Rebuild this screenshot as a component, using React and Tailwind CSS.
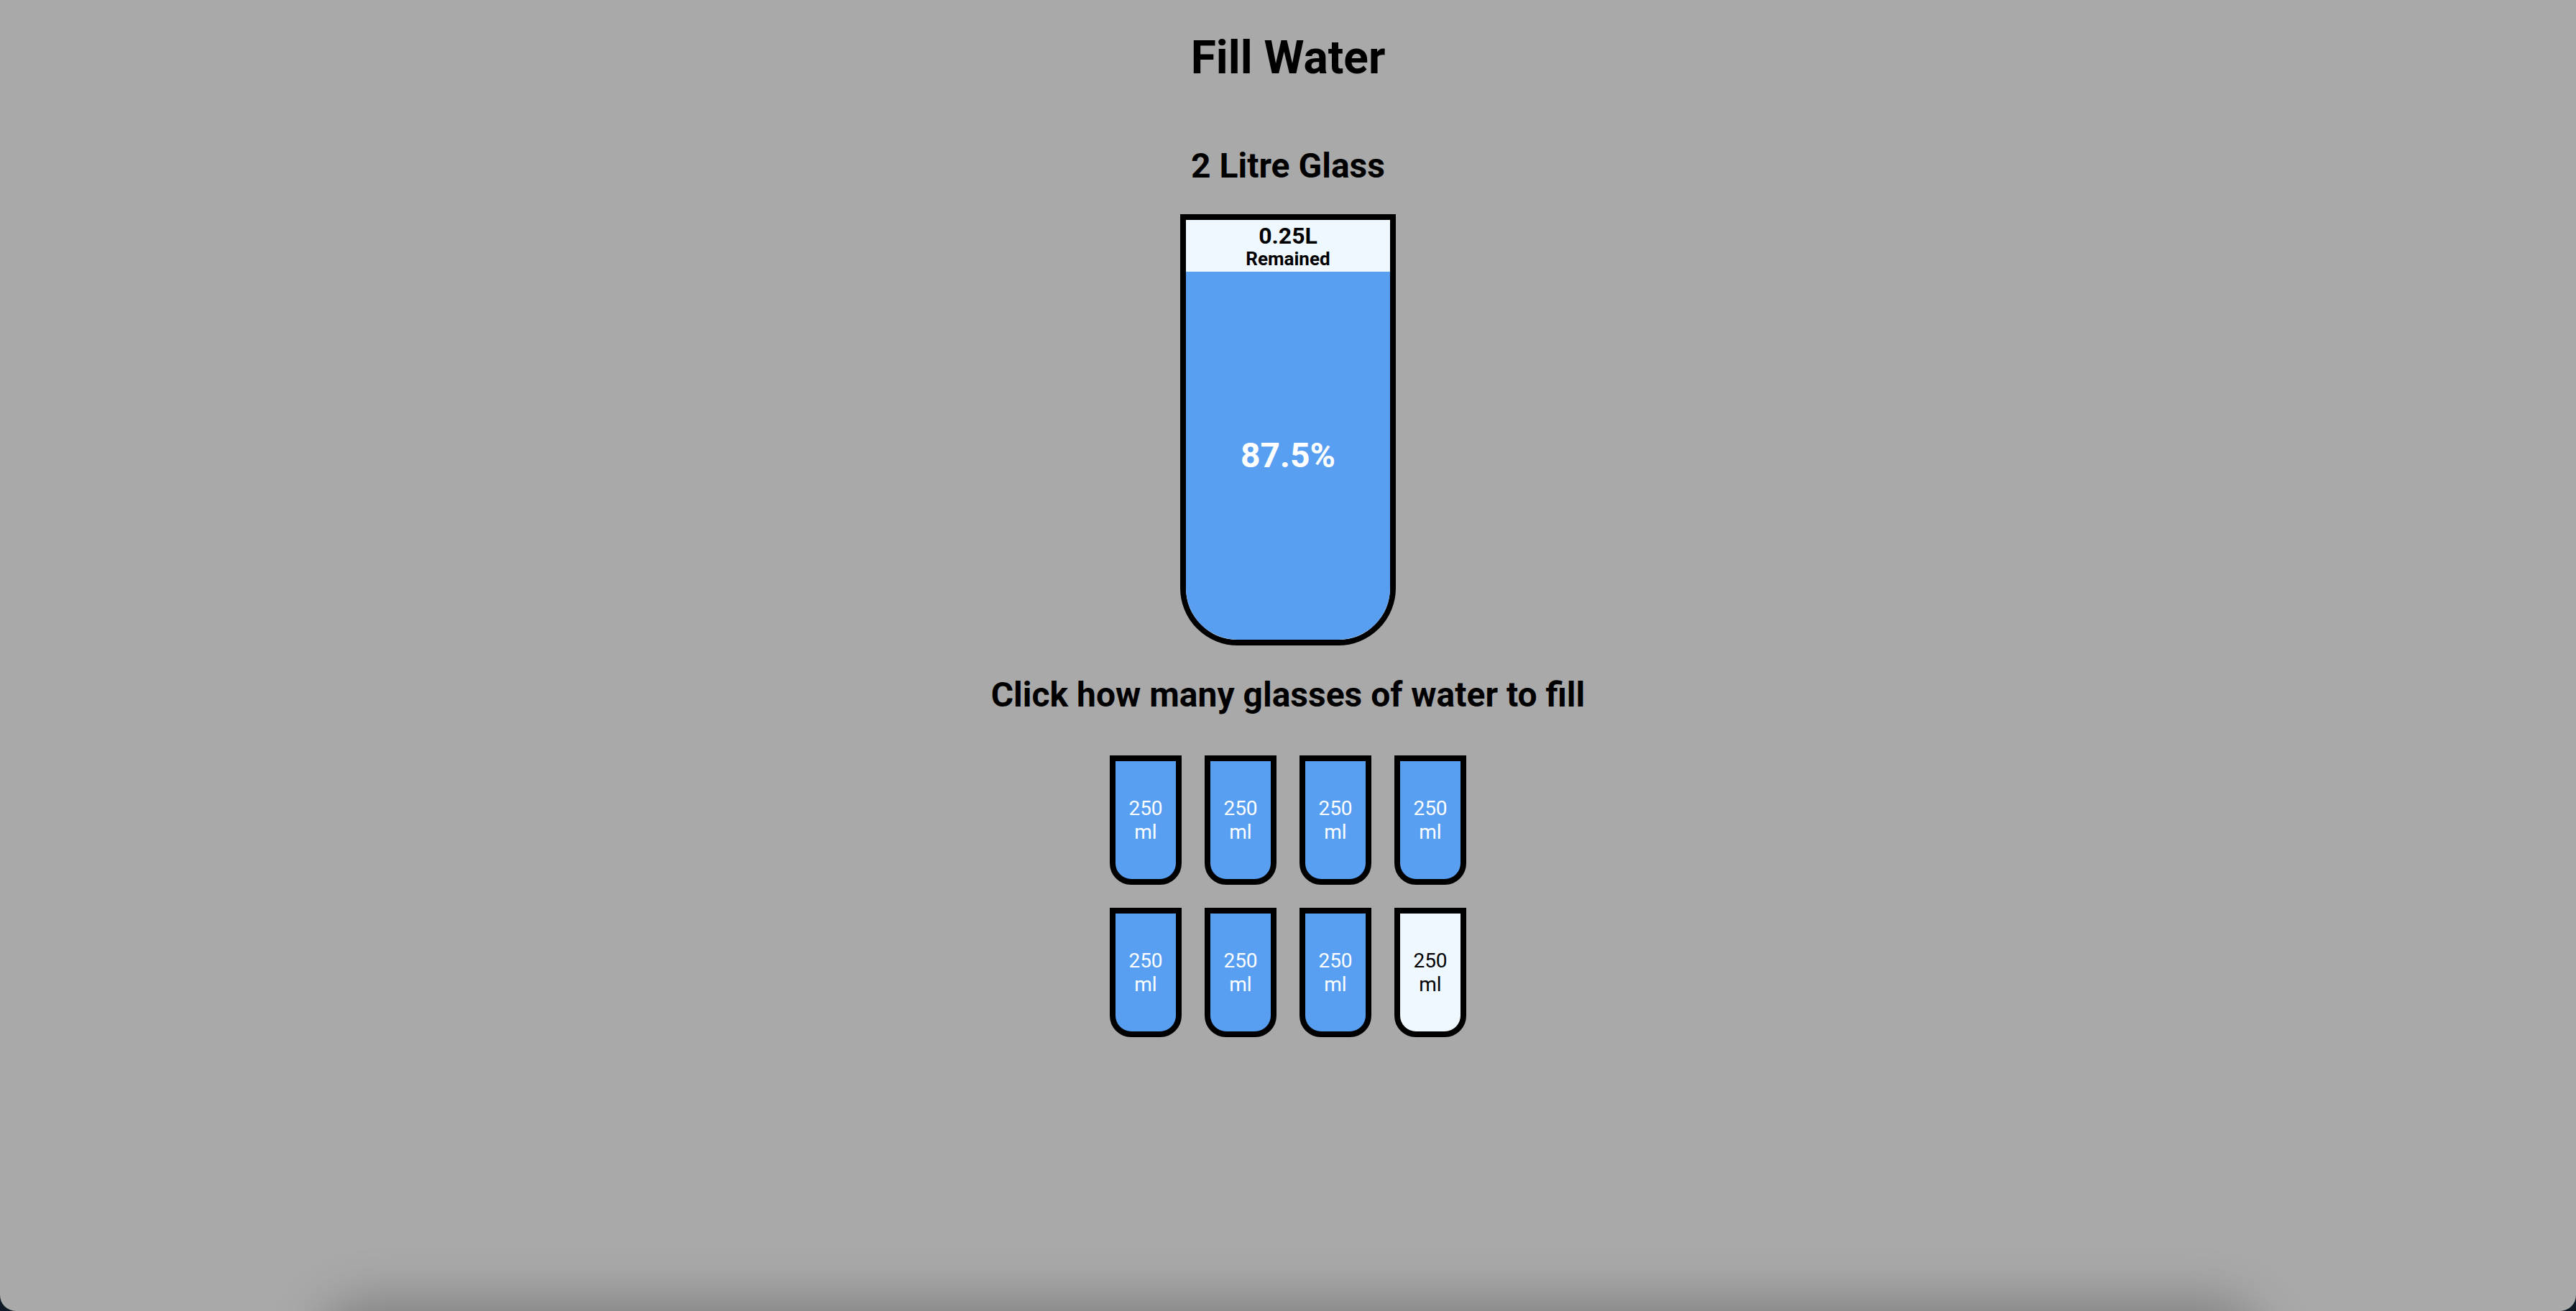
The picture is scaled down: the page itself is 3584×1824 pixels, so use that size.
import { useState } from "react";

const TOTAL_CUPS = 8;

const Cup = ({ full, onClick }) => (
  <button
    onClick={onClick}
    className={`w-[100px] h-[180px] border-8 border-black rounded-b-[30px] flex items-center justify-center text-center text-[28px] leading-[normal] cursor-pointer ${
      full ? "bg-[#589ff2] text-white" : "bg-[#f0f8ff] text-black"
    }`}
  >
    <span className="max-w-[60px]">250 ml</span>
  </button>
);

export default function App() {
  const [filled, setFilled] = useState(7);

  const percent = (filled / TOTAL_CUPS) * 100;
  const remained = 2 - filled * 0.25;

  return (
    <div className="min-h-screen bg-[#0f1b27]">
      <div className="relative h-[1824px] overflow-hidden rounded-b-[22px] bg-[#a9a9a9] flex flex-col items-center font-['Roboto','Liberation_Sans',sans-serif] text-black">
        <h1 className="mt-[43px] text-[64px] font-bold leading-[normal]">Fill Water</h1>
        <h2 className="mt-[84px] text-[48px] font-bold leading-[normal]">2 Litre Glass</h2>

        {/* big glass */}
        <div className="mt-[39px] w-[300px] h-[600px] border-8 border-black rounded-b-[80px] bg-[#f0f8ff] flex flex-col overflow-hidden">
          <div className="h-[72px] flex flex-col items-center justify-center font-bold leading-[normal]">
            <span className="text-[32px]">{remained}L</span>
            <span className="text-[26px] -mt-[2px]">Remained</span>
          </div>
          <div className="flex-1 bg-[#589ff2] flex items-center justify-center text-white text-[48px] font-bold">
            {percent}%
          </div>
        </div>

        <h3 className="mt-[40px] text-[48px] font-bold leading-[normal]">Click how many glasses of water to fill</h3>

        <div className="mt-[56px] grid grid-cols-4 gap-[32px]">
          {Array.from({ length: TOTAL_CUPS }).map((_, i) => (
            <Cup key={i} full={i < filled} onClick={() => setFilled(i + 1 === filled ? i : i + 1)} />
          ))}
        </div>

        {/* shadow from something sitting just under the window */}
        <div className="absolute left-[457px] right-[453px] top-[1830px] h-[120px] rounded-[80px] shadow-[0_0_70px_20px_rgba(0,0,0,0.25)]" />
      </div>
    </div>
  );
}
